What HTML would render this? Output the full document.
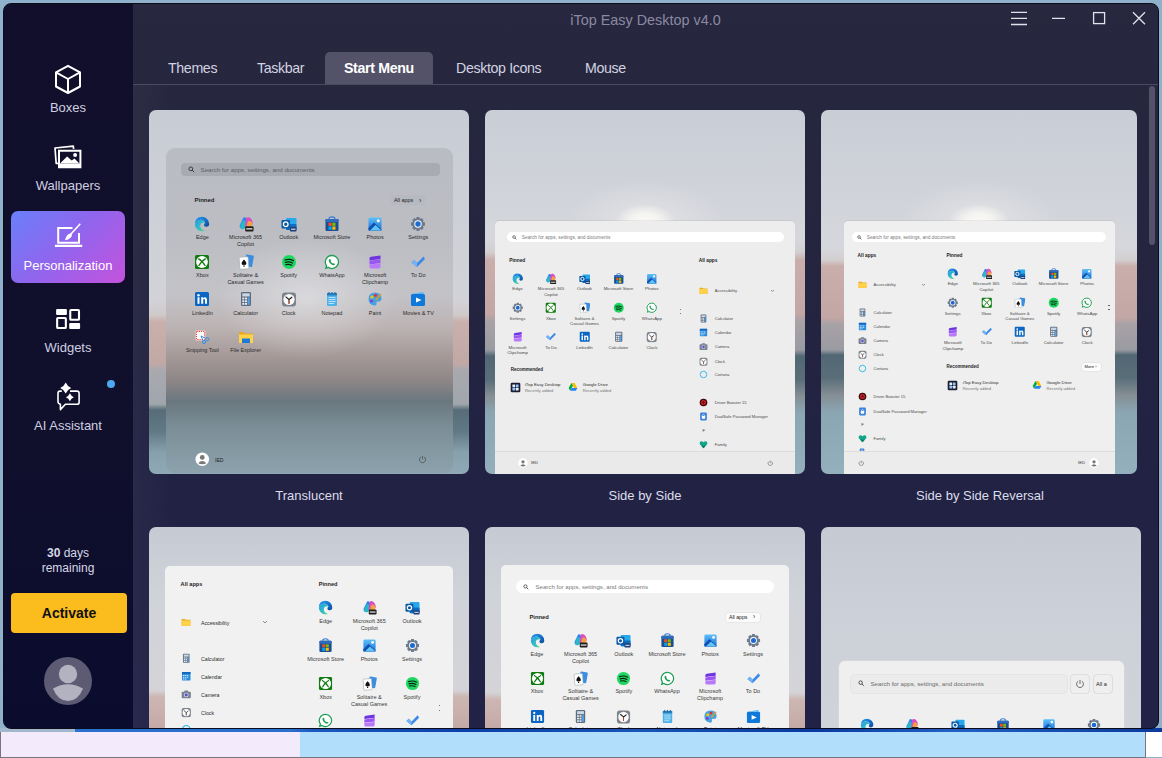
<!DOCTYPE html><html><head><meta charset="utf-8"><title>iTop Easy Desktop</title><style>
*{margin:0;padding:0;box-sizing:border-box}
html,body{width:1162px;height:758px;overflow:hidden;background:#8fb1cc;font-family:"Liberation Sans",sans-serif}
.a{position:absolute}
#win{position:absolute;left:3px;top:3px;width:1156px;height:726px;border-radius:8px;overflow:hidden;border:1px solid #0c0c1a;background:linear-gradient(180deg,#27273f 0%,#25253f 30%,#222343 60%,#212246 100%)}
#inner{position:absolute;left:-4px;top:-4px;width:1162px;height:758px}
#side{position:absolute;left:3px;top:3px;width:130px;height:725px;background:linear-gradient(180deg,#110f2b 0%,#100f2c 60%,#0a0c2e 100%)}
.lbl{position:absolute;color:#cfcfe0;font-size:13px;white-space:nowrap;text-align:center}
.tab{position:absolute;color:#d3d3e0;font-size:14.2px;letter-spacing:-0.35px;white-space:nowrap}
.card{position:absolute;border-radius:7px;overflow:hidden}
.cl{position:absolute;color:#dcdcea;font-size:13px;white-space:nowrap;text-align:center}
.t{white-space:nowrap;line-height:1}
</style></head><body>
<div class="a" style="left:0;top:728px;width:1162px;height:4px;background:linear-gradient(90deg,#2a70d0 0%,#2a70d0 25%,#1c58bf 27%,#0d40a8 40%,#1a55b8 55%,#0a3aa0 70%,#2460c4 82%,#0b3a9c 100%)"></div>
<div class="a" style="left:0;top:728px;width:75px;height:4px;background:#a3b8cc"></div>
<div class="a" style="left:0;top:732px;width:300px;height:25px;background:#f3ebfc"></div>
<div class="a" style="left:300px;top:732px;width:845px;height:25px;background:#b1dffb"></div>
<div class="a" style="left:1145px;top:732px;width:17px;height:25px;background:#ffffff"></div>
<div class="a" style="left:0;top:757px;width:1145px;height:1px;background:#76767e"></div>
<div class="a" style="left:0;top:732px;width:1px;height:26px;background:#76767e"></div>
<div class="a" style="left:1145px;top:732px;width:1px;height:26px;background:#76767e"></div>
<div id="win"><div id="inner">
<div id="side"></div>
<div class="a" style="left:133px;top:85px;width:40px;height:645px;background:linear-gradient(90deg,rgba(255,255,255,.03),rgba(255,255,255,0))"></div>
<div class="a" style="left:0;top:12px;width:1291px;text-align:center;color:#8b8aa2;font-size:14.4px;white-space:nowrap">iTop Easy Desktop v4.0</div>
<svg class="a" style="left:1005px;top:6px" width="150" height="26" viewBox="1005 6 150 26" fill="none" stroke="#e2e2ec" stroke-width="1.3">
<path d="M1011 12.3h16M1011 18.4h16M1011 24.5h16"/>
<path d="M1052 18.4h13"/>
<rect x="1093.6" y="12.6" width="11" height="11"/>
<path d="M1133 12.2l12 12M1145 12.2l-12 12"/>
</svg>
<div class="a" style="left:133px;top:84px;width:1025px;height:1px;background:#4c4a63"></div>
<div class="a" style="left:325px;top:52px;width:108px;height:32px;background:#545269;border-radius:5px 5px 0 0"></div>
<div class="tab" style="left:168px;top:60px;">Themes</div>
<div class="tab" style="left:257px;top:60px;">Taskbar</div>
<div class="tab" style="left:344px;top:60px;font-weight:bold;color:#ffffff;">Start Menu</div>
<div class="tab" style="left:456px;top:60px;">Desktop Icons</div>
<div class="tab" style="left:585px;top:60px;">Mouse</div>
<div class="a" style="left:1149px;top:86px;width:6px;height:159px;background:#545268;border-radius:3px"></div>
<svg class="a" style="left:50px;top:60px" width="36" height="38" viewBox="0 0 36 38" fill="none" stroke="#fff" stroke-width="2" stroke-linejoin="round">
<path d="M18 5.8 L30 12.3 V26.5 L18 33 L6 26.5 V12.3 Z"/><path d="M6 12.3 L18 19 L30 12.3 M18 19 V33"/></svg>
<div class="lbl" style="left:8px;width:120px;top:100px;">Boxes</div>
<svg class="a" style="left:50px;top:140px" width="36" height="34" viewBox="0 0 36 34">
<path d="M8.5 23.3 L6.2 23.5 L5 8 L23.3 6.1 L23.6 9" fill="none" stroke="#fff" stroke-width="1.7" stroke-linejoin="round"/>
<path d="M8 9.8 H31.4 V28.2 H8 Z M10 11.8 V23.4 H29.4 V11.8 Z" fill="#fff" fill-rule="evenodd"/>
<path d="M10 23.6 L17.1 16.5 L21.7 20.4 L24.5 18.6 L29.4 23.6 Z" fill="#fff"/>
<circle cx="25.1" cy="15.1" r="2" fill="#fff"/></svg>
<div class="lbl" style="left:8px;width:120px;top:178px;">Wallpapers</div>
<div class="a" style="left:11px;top:211px;width:114px;height:72px;border-radius:7px;background:linear-gradient(135deg,#6a80fa 0%,#8e66ee 45%,#c452dc 100%)"></div>
<svg class="a" style="left:50px;top:220px" width="36" height="32" viewBox="0 0 36 32" fill="none" stroke="#fff">
<path d="M22.5 7.9 H8.2 V22.7 H29 V13" stroke-width="2"/>
<path d="M4.9 25.9 H32.2" stroke-width="2.2"/>
<path d="M30.3 3.8 L20.5 14.5" stroke-width="1.6"/>
<path d="M20.8 13.6 Q17.6 13.8 16.2 17 L14.8 20.3 Q18.8 19.8 20.6 17.8 Q22.2 16.2 21.9 14.7 Z" fill="#fff" stroke="none"/></svg>
<div class="lbl" style="left:8px;width:120px;top:258px;color:#fff">Personalization</div>
<svg class="a" style="left:50px;top:302px" width="36" height="32" viewBox="0 0 36 32" fill="#fff">
<rect x="6.1" y="7" width="10.8" height="6" rx="1"/><rect x="20.25" y="8.05" width="8.75" height="9.7" rx=".8" fill="none" stroke="#fff" stroke-width="2.1"/>
<rect x="7.15" y="15.95" width="8.7" height="10.1" rx=".8" fill="none" stroke="#fff" stroke-width="2.1"/><rect x="19.2" y="21.1" width="10.9" height="5.8" rx="1"/></svg>
<div class="lbl" style="left:8px;width:120px;top:340px;">Widgets</div>
<svg class="a" style="left:50px;top:378px" width="36" height="36" viewBox="0 0 36 36" fill="none" stroke="#fff" stroke-width="1.6">
<path d="M20 13.1 H27 Q29.1 13.1 29.1 15.2 V24.2 Q29.1 26.3 27 26.3 H15.4 L10.4 31.6 V26.2 Q8 25.8 8 23.5 V15.2 Q8 13.1 10.1 13.1 H11.8" stroke-linejoin="round"/>
<path d="M15.7 4.4 Q17.349999999999998 8.25 21.2 9.9 Q17.349999999999998 11.55 15.7 15.4 Q14.049999999999999 11.55 10.2 9.9 Q14.049999999999999 8.25 15.7 4.4Z" fill="#fff" stroke="none"/>
<path d="M19.9 15.2 Q21.099999999999998 18.0 23.9 19.2 Q21.099999999999998 20.4 19.9 23.2 Q18.7 20.4 15.899999999999999 19.2 Q18.7 18.0 19.9 15.2Z" fill="#fff" stroke="none"/></svg>
<div class="a" style="left:107px;top:380px;width:8px;height:8px;border-radius:50%;background:#4aa9f2"></div>
<div class="lbl" style="left:8px;width:120px;top:418px;">AI Assistant</div>
<div class="lbl" style="left:8px;width:120px;top:546px;font-size:12px;color:#d8d8e6"><b>30</b> days</div>
<div class="lbl" style="left:8px;width:120px;top:561px;font-size:12px;color:#d8d8e6">remaining</div>
<div class="a" style="left:11px;top:593px;width:116px;height:40px;border-radius:4px;background:#fbbd1e;color:#111;font-size:14px;font-weight:bold;text-align:center;line-height:41px">Activate</div>
<svg class="a" style="left:44px;top:657px" width="48" height="48" viewBox="0 0 48 48">
<circle cx="24" cy="24" r="24" fill="#5c5b73"/><circle cx="24" cy="17" r="9.2" fill="#b3b2c0"/>
<path d="M9 31.5 Q24 23 39 31.5 Q34 44 24 44 Q14 44 9 31.5Z" fill="#b3b2c0"/></svg>
<svg width="0" height="0" style="position:absolute"><defs>
<symbol id="i-edge" viewBox="0 0 16 16"><defs><linearGradient id="edg" x1="0" y1="0" x2="1" y2="1"><stop offset="0" stop-color="#2a9ff0"/><stop offset=".55" stop-color="#1670cc"/><stop offset="1" stop-color="#0b4a96"/></linearGradient>
<linearGradient id="edg2" x1="0" y1="0" x2="1" y2="1"><stop offset="0" stop-color="#1e9de6"/><stop offset=".6" stop-color="#35c0c0"/><stop offset="1" stop-color="#5ad67a"/></linearGradient></defs>
<path d="M8 .8 A7.2 7.2 0 0 1 15.2 8 Q15.2 10.8 12.4 10.8 Q10.2 10.8 10 9.2 Q10 7.6 11.2 6.8 Q9.8 3.6 6.6 3.8 Q2.6 4.2 .9 8.4 Q.9 .8 8 .8Z" fill="url(#edg)"/>
<path d="M.9 8.4 Q2.6 4.2 6.6 3.8 Q9.8 3.6 11.2 6.8 Q6.8 5.8 6.2 9.6 Q6 13.4 10.8 15 Q9.4 15.2 8 15.2 A7.2 7.2 0 0 1 .9 8.4Z" fill="url(#edg2)"/></symbol>
<symbol id="i-m365" viewBox="0 0 16 16"><path d="M5.5 1.5 Q7 .8 8 2 L10 5 L6.5 11 Q5 13.5 3 12.5 Q1 11.5 1.8 9 Z" fill="#2f7ff0"/><path d="M3 12.5 Q1.5 11 2.6 8.6 L4.5 5 Q6 3.5 7.5 5.5 L9 8 L6.5 12.5 Q5 13.6 3 12.5Z" fill="#28b8c8"/>
<path d="M8 2 Q9 .9 10.8 1.2 Q12.5 1.6 13.6 3.6 L14.6 6 Q15 8.5 13 10 L10 12 Q8 12.5 7 10.5 Z" fill="#d94fc0"/><path d="M10 5 Q12 4.5 13.6 6 Q15 8 13.5 10 L11 12 Q9 12.8 8.5 10.8Z" fill="#f5a03a"/>
<rect x="7.2" y="10.2" width="8.3" height="5.3" rx="1" fill="#1e1e1e"/><rect x="8.3" y="12.2" width="6.1" height="1.3" fill="#e8e8e8"/></symbol>
<symbol id="i-outlook" viewBox="0 0 16 16"><rect x="5" y="2" width="10.5" height="12" rx="1.2" fill="#28a8ea"/><rect x="5" y="8" width="10.5" height="6" rx="1" fill="#0f6cbd"/><rect x="0.5" y="4" width="8.5" height="8.5" rx="1" fill="#0a5aa8"/><circle cx="4.75" cy="8.25" r="2.3" fill="none" stroke="#fff" stroke-width="1.3"/><rect x="9" y="11" width="6.5" height="4.5" rx=".8" fill="#1d3f78"/><rect x="10" y="12.6" width="4.5" height="1.2" fill="#cfd8e8"/></symbol>
<symbol id="i-store" viewBox="0 0 16 16"><path d="M5 3 Q5 .8 8 .8 Q11 .8 11 3" fill="none" stroke="#3a7bd5" stroke-width="1.2"/><rect x="1.5" y="3" width="13" height="12" rx="1.3" fill="#1c4f8f"/><rect x="1.5" y="3" width="13" height="3" rx="1" fill="#2e6bbf"/><rect x="4.5" y="6.7" width="3.2" height="3.2" fill="#f25022"/><rect x="8.3" y="6.7" width="3.2" height="3.2" fill="#7fba00"/><rect x="4.5" y="10.5" width="3.2" height="3.2" fill="#00a4ef"/><rect x="8.3" y="10.5" width="3.2" height="3.2" fill="#ffb900"/></symbol>
<symbol id="i-photos" viewBox="0 0 16 16"><defs><linearGradient id="pg" x1="0" y1="0" x2="0" y2="1"><stop offset="0" stop-color="#5ec0f8"/><stop offset="1" stop-color="#1a6fd8"/></linearGradient></defs><rect x="1.5" y="1.5" width="13" height="13" rx="1.5" fill="url(#pg)"/><path d="M1.5 12 L7 6.5 L14.5 13.5 V14.5 H1.5Z" fill="#0f4fb0"/><path d="M3 14.5 L8.5 9 L14.5 14.5Z" fill="#62c4f5"/><circle cx="11.3" cy="4.7" r="1.5" fill="#fff"/></symbol>
<symbol id="i-settings" viewBox="0 0 16 16"><path d="M6.6 1 H9.4 L9.9 3 L11.6 2 L13.6 4 L12.8 5.8 L15 6.4 V9.6 L12.8 10.2 L13.8 12 L11.8 14 L10 13 L9.4 15 H6.6 L6.1 13 L4.2 14 L2.2 12 L3.2 10.2 L1 9.6 V6.4 L3.2 5.8 L2.3 4 L4.3 2 L6.1 3Z" fill="#6d7b8c"/><circle cx="8" cy="8" r="3.7" fill="#fff"/><circle cx="8" cy="8" r="2.7" fill="#1f6ad0"/></symbol>
<symbol id="i-xbox" viewBox="0 0 16 16"><rect x="1" y="1" width="14" height="14" rx="1.5" fill="#107c10"/><circle cx="8" cy="8" r="5.9" fill="#fff"/><path d="M4.3 4.6 Q8.2 6.6 11.4 12 M11.7 4.6 Q7.8 6.6 4.6 12" stroke="#107c10" stroke-width="1.25" fill="none"/></symbol>
<symbol id="i-solitaire" viewBox="0 0 16 16"><rect x="7" y="1" width="8" height="11.5" rx="1" fill="#3a8de0" transform="rotate(10 11 7)"/><rect x="1.5" y="3" width="9" height="12" rx="1" fill="#fff" stroke="#9aa" stroke-width=".6" transform="rotate(-4 6 9)"/><path d="M6 5.5 Q3 8.5 3.8 10.3 Q4.8 11.6 6 10.4 L5.2 12.8 H6.8 L6 10.4 Q7.2 11.6 8.2 10.3 Q9 8.5 6 5.5Z" fill="#111"/></symbol>
<symbol id="i-spotify" viewBox="0 0 16 16"><circle cx="8" cy="8" r="7" fill="#1ed760"/><path d="M3.8 6 Q8.5 4.5 12.4 6.6 M4.3 8.4 Q8.3 7.2 11.6 9 M4.8 10.7 Q8 9.8 10.8 11.2" stroke="#0d1f12" stroke-width="1.2" fill="none" stroke-linecap="round"/></symbol>
<symbol id="i-whatsapp" viewBox="0 0 16 16"><path d="M8 1.5 A6.5 6.5 0 1 1 4.2 13.3 L1.8 14.2 L2.6 11.8 A6.5 6.5 0 0 1 8 1.5Z" fill="#fff" stroke="#1f9d55" stroke-width="1.3"/><path d="M5.3 5.2 Q6 4.6 6.5 5.4 L7 6.6 Q7 7 6.6 7.3 Q7.3 8.8 8.8 9.6 Q9.2 9.2 9.5 9.2 L10.7 9.8 Q11.2 10.3 10.6 10.9 Q9.5 11.8 7.5 10.6 Q5.3 9.2 4.8 7 Q4.6 5.9 5.3 5.2Z" fill="#1f9d55"/></symbol>
<symbol id="i-clipchamp" viewBox="0 0 16 16"><path d="M2.5 4.5 Q2.5 3 4 2.8 L13.5 1.5 V5 L2.5 6.5Z" fill="#6f35e0"/><path d="M2.5 6.8 L13.5 5.3 V9 L2.5 10.5Z" fill="#9a55f2"/><path d="M2.5 10.8 L13.5 9.3 V12.5 Q13.5 14.5 11.5 14.5 H4 Q2.5 14.5 2.5 13Z" fill="#b978f8"/></symbol>
<symbol id="i-todo" viewBox="0 0 16 16"><path d="M1.5 8.5 L4 6 L7 9 L13.5 2.5 L15 5 L7 13Z" fill="#3c8ae8"/><path d="M1.5 8.5 L4 6 L7 9 L7 13Z" fill="#74b3f5"/></symbol>
<symbol id="i-linkedin" viewBox="0 0 16 16"><rect x="1" y="1" width="14" height="14" rx="1.5" fill="#0a66c2"/><rect x="3.5" y="6.3" width="2" height="6.5" fill="#fff"/><circle cx="4.5" cy="4.2" r="1.2" fill="#fff"/><path d="M7.2 6.3 H9 V7.3 Q9.8 6.1 11.3 6.2 Q13 6.4 13 8.8 V12.8 H11 V9.2 Q11 7.9 10.1 7.9 Q9.2 7.9 9.2 9.2 V12.8 H7.2Z" fill="#fff"/></symbol>
<symbol id="i-calculator" viewBox="0 0 16 16"><rect x="3" y="1" width="10" height="14" rx="1.3" fill="#5f6c7b"/><rect x="4.3" y="2.3" width="7.4" height="3.2" fill="#c8d8e8"/><g fill="#e8eef4"><rect x="4.3" y="6.6" width="2" height="1.8"/><rect x="7" y="6.6" width="2" height="1.8"/><rect x="4.3" y="9.3" width="2" height="1.8"/><rect x="7" y="9.3" width="2" height="1.8"/><rect x="4.3" y="12" width="2" height="1.8"/><rect x="7" y="12" width="2" height="1.8"/></g><rect x="9.7" y="6.6" width="2" height="7.2" fill="#4da3f0"/></symbol>
<symbol id="i-clock" viewBox="0 0 16 16"><rect x="1" y="1.5" width="14" height="14" rx="3" fill="#7c838d"/><circle cx="8" cy="8.5" r="5.6" fill="#fafafa"/><path d="M8 8.5 L8 12.8 M8 8.5 L4.6 5.6 M8 8.5 L11.2 6" stroke="#1e1e1e" stroke-width="1.1"/><path d="M8 9 L8 12.8" stroke="#e8542a" stroke-width=".8"/></symbol>
<symbol id="i-notepad" viewBox="0 0 16 16"><rect x="3" y="2" width="10" height="13" rx="1" fill="#4fb3ea"/><rect x="3" y="2" width="10" height="2.5" fill="#2a7fc0"/><g stroke="#e8f5fc" stroke-width=".7"><path d="M4.5 6.5 H11.5 M4.5 8.5 H11.5 M4.5 10.5 H11.5 M4.5 12.5 H10"/></g><g fill="#1d5f9a"><rect x="4.5" y="1" width="1" height="2"/><rect x="7.5" y="1" width="1" height="2"/><rect x="10.5" y="1" width="1" height="2"/></g></symbol>
<symbol id="i-paint" viewBox="0 0 16 16"><path d="M8 1.5 Q14.5 1.5 14.5 7.5 Q14.5 11 11 10.5 Q9 10.2 9.5 12.5 Q10 15 7 14.5 Q1.5 13.5 1.5 8 Q1.5 1.5 8 1.5Z" fill="#4aa0e0"/><circle cx="5" cy="6" r="1.6" fill="#f5c400"/><circle cx="8.5" cy="4.3" r="1.5" fill="#e0312a"/><circle cx="11.5" cy="6.5" r="1.4" fill="#2bb04a"/><circle cx="4.5" cy="10" r="1.5" fill="#7a3ed8"/><path d="M9 9 L14 3" stroke="#d89a50" stroke-width="1.6"/></symbol>
<symbol id="i-movies" viewBox="0 0 16 16"><rect x="1" y="3" width="14" height="12" rx="1.5" fill="#1078d8"/><path d="M1 3 L13 1 L14 3Z" fill="#5cb8f5"/><path d="M6 6.5 L11.5 9 L6 11.5Z" fill="#fff"/></symbol>
<symbol id="i-snipping" viewBox="0 0 16 16"><rect x="1.5" y="1.5" width="10" height="10" rx="1" fill="#fff" stroke="#d8a0a0" stroke-width=".5"/><path d="M2.5 2.5 H10.5 V10.5 H2.5Z" fill="none" stroke="#e0442e" stroke-width="1" stroke-dasharray="1.2 1"/><circle cx="10" cy="13" r="1.6" fill="none" stroke="#3a8ee0" stroke-width="1"/><circle cx="13.3" cy="10.3" r="1.6" fill="none" stroke="#3a8ee0" stroke-width="1"/><path d="M7 7 L9.2 11.8 M7 7 L12 9.5" stroke="#3a8ee0" stroke-width="1"/></symbol>
<symbol id="i-explorer" viewBox="0 0 16 16"><path d="M1 3 H6 L7.5 4.5 H15 V14 H1Z" fill="#e8a91c"/><rect x="1" y="5.5" width="14" height="8.5" fill="#ffd24a"/><rect x="4" y="9.5" width="8" height="4.5" fill="#1d7ad8"/></symbol>
<symbol id="i-folder" viewBox="0 0 16 16"><path d="M1 3 H6 L7.5 4.5 H15 V14 H1Z" fill="#e8a91c"/><rect x="1" y="5.5" width="14" height="8.5" fill="#ffd24a"/></symbol>
<symbol id="i-calendar" viewBox="0 0 16 16"><rect x="1.5" y="1.5" width="13" height="13" rx="1" fill="#2a8ee0"/><rect x="1.5" y="1.5" width="13" height="3" fill="#1468c0"/><g fill="#cfe6fa"><rect x="3" y="6" width="2" height="1.6"/><rect x="6" y="6" width="2" height="1.6"/><rect x="9" y="6" width="2" height="1.6"/><rect x="3" y="8.7" width="2" height="1.6"/><rect x="6" y="8.7" width="2" height="1.6"/><rect x="9" y="8.7" width="2" height="1.6"/><rect x="3" y="11.4" width="2" height="1.6"/><rect x="6" y="11.4" width="2" height="1.6"/></g></symbol>
<symbol id="i-camera" viewBox="0 0 16 16"><rect x="1" y="4" width="14" height="10" rx="1.5" fill="#7a828e"/><rect x="5" y="2.3" width="6" height="2.5" rx=".6" fill="#7a828e"/><circle cx="8" cy="9" r="3.4" fill="#e0e4ea"/><circle cx="8" cy="9" r="2.4" fill="#5a4fd8"/></symbol>
<symbol id="i-cortana" viewBox="0 0 16 16"><circle cx="8" cy="8" r="5.8" fill="none" stroke="#2fb5e8" stroke-width="1.6"/></symbol>
<symbol id="i-driver" viewBox="0 0 16 16"><circle cx="8" cy="8" r="6.8" fill="#3a0a0a"/><circle cx="8" cy="8" r="4.5" fill="#c8202a"/><path d="M5.5 8 H10.5 M8 5.5 V10.5" stroke="#3a0a0a" stroke-width="1"/></symbol>
<symbol id="i-dualsafe" viewBox="0 0 16 16"><rect x="2" y="1" width="12" height="14" rx="2" fill="#3b82d8"/><rect x="5" y="7" width="6" height="5" rx=".8" fill="#fff"/><path d="M6 7 V5.5 Q8 3.2 10 5.5 V7" stroke="#fff" stroke-width="1.1" fill="none"/></symbol>
<symbol id="i-family" viewBox="0 0 16 16"><path d="M8 14.5 L1.8 8 Q0 5.5 2 3.2 Q4.8 1 8 4.2 Q11.2 1 14 3.2 Q16 5.5 14.2 8Z" fill="#12a58a"/><path d="M8 14.5 L4 10.3 Q6 8.8 8 10.5 Q10 8.8 12 10.3Z" fill="#0b7a66"/></symbol>
<symbol id="i-itop" viewBox="0 0 16 16"><rect x="1" y="1" width="14" height="14" rx="2" fill="#1c1d2e"/><rect x="3.5" y="3.5" width="4" height="4" rx=".6" fill="#e8f0ff"/><rect x="8.5" y="3.5" width="4" height="4" rx=".6" fill="#8fc4ff"/><rect x="3.5" y="8.5" width="4" height="4" rx=".6" fill="#8fc4ff"/><rect x="8.5" y="8.5" width="4" height="4" rx=".6" fill="#e8f0ff"/></symbol>
<symbol id="i-gdrive" viewBox="0 0 16 16"><path d="M5.5 1.5 H10.5 L15 9.5 H10Z" fill="#ffba00"/><path d="M5.5 1.5 L1 9.5 L3.5 14 L8 6Z" fill="#00ac47"/><path d="M3.5 14 H12.5 L15 9.5 H6Z" fill="#2684fc"/></symbol>
<symbol id="i-search" viewBox="0 0 16 16"><circle cx="6.5" cy="6.5" r="4.3" fill="none" stroke="#222" stroke-width="1.8"/><path d="M9.8 9.8 L14 14" stroke="#222" stroke-width="2"/></symbol>
<symbol id="i-power" viewBox="0 0 16 16"><path d="M5 3.5 A5.5 5.5 0 1 0 11 3.5" fill="none" stroke="#444" stroke-width="1.2"/><path d="M8 1.5 V8" stroke="#444" stroke-width="1.2"/></symbol>
<symbol id="i-user" viewBox="0 0 16 16"><circle cx="8" cy="8" r="7.5" fill="#fff"/><circle cx="8" cy="6" r="2.6" fill="#777"/><path d="M3.5 12.3 Q8 7.5 12.5 12.3 Q8 14.5 3.5 12.3Z" fill="#777"/></symbol>
<symbol id="i-usergrey" viewBox="0 0 16 16"><circle cx="8" cy="8" r="7.5" fill="#e4e4e4"/><circle cx="8" cy="6" r="2.6" fill="#777"/><path d="M3.5 12.3 Q8 7.5 12.5 12.3 Q8 14.5 3.5 12.3Z" fill="#777"/></symbol>
</defs></svg>
<div class="card" style="left:149px;top:110px;width:320px;height:364px;background:linear-gradient(180deg,#c8ccd5 0.0%,#d2d3d8 52.2%,#d0c9ca 56.3%,#c9b0ac 58.2%,#c0a8a5 69.8%,#a9a9af 71.4%,#a0a6ac 80.8%,#566d78 82.4%,#627a86 88.5%,#86a0ac 94.0%,#8fa9b6 100.0%)"><div class="a" style="left:-149px;top:-110px;width:1162px;height:758px">
<div class="a" style="left:166.00px;top:148.00px;width:287.00px;height:325.00px;border-radius:9px;background:radial-gradient(ellipse 90px 60px at 140px 150px,rgba(235,235,238,.55),rgba(235,235,238,0)),linear-gradient(180deg,#b9bcc3 0%,#bdbec3 30%,#c3c3c7 45%,#bcb3b3 55%,#a39796 65%,#8c8586 72%,#6a777f 78%,#7b8e97 86%,#8ca2ac 100%)"></div>
<div class="a" style="left:181.00px;top:163.20px;width:259.00px;height:12.80px;border-radius:4px;background:#a8abb2"></div>
<svg class="a" style="left:188.00px;top:166.30px" width="7" height="7"><use href="#i-search"/></svg>
<div class="a t" style="left:200.50px;top:166.95px;font-size:6.2px;color:#5e6168;font-weight:normal;">Search for apps, settings, and documents</div>
<div class="a t" style="left:194.50px;top:196.76px;font-size:6px;color:#1e1e1e;font-weight:bold;">Pinned</div>
<div class="a" style="left:390.50px;top:195.00px;width:34.00px;height:10.00px;border-radius:3px;background:#b6b9c0"></div>
<div class="a t" style="left:394.00px;top:198.36px;font-size:5.4px;color:#1e1e1e;font-weight:normal;">All apps</div>
<div class="a t" style="left:419.00px;top:196.52px;font-size:7px;color:#333;font-weight:normal;">&#8250;</div>
<svg class="a" style="left:194.40px;top:215.75px" width="16" height="16"><use href="#i-edge"/></svg>
<div class="a t" style="left:172.40px;width:60px;text-align:center;top:234.37px;font-size:5.5px;color:#2a2a2a;font-weight:normal;line-height:7px;">Edge</div>
<svg class="a" style="left:237.60px;top:215.75px" width="16" height="16"><use href="#i-m365"/></svg>
<div class="a t" style="left:215.60px;width:60px;text-align:center;top:234.37px;font-size:5.5px;color:#2a2a2a;font-weight:normal;line-height:7px;">Microsoft 365<br>Copilot</div>
<svg class="a" style="left:280.70px;top:215.75px" width="16" height="16"><use href="#i-outlook"/></svg>
<div class="a t" style="left:258.70px;width:60px;text-align:center;top:234.37px;font-size:5.5px;color:#2a2a2a;font-weight:normal;line-height:7px;">Outlook</div>
<svg class="a" style="left:323.90px;top:215.75px" width="16" height="16"><use href="#i-store"/></svg>
<div class="a t" style="left:301.90px;width:60px;text-align:center;top:234.37px;font-size:5.5px;color:#2a2a2a;font-weight:normal;line-height:7px;">Microsoft Store</div>
<svg class="a" style="left:367.10px;top:215.75px" width="16" height="16"><use href="#i-photos"/></svg>
<div class="a t" style="left:345.10px;width:60px;text-align:center;top:234.37px;font-size:5.5px;color:#2a2a2a;font-weight:normal;line-height:7px;">Photos</div>
<svg class="a" style="left:410.30px;top:215.75px" width="16" height="16"><use href="#i-settings"/></svg>
<div class="a t" style="left:388.30px;width:60px;text-align:center;top:234.37px;font-size:5.5px;color:#2a2a2a;font-weight:normal;line-height:7px;">Settings</div>
<svg class="a" style="left:194.40px;top:253.80px" width="16" height="16"><use href="#i-xbox"/></svg>
<div class="a t" style="left:172.40px;width:60px;text-align:center;top:272.17px;font-size:5.5px;color:#2a2a2a;font-weight:normal;line-height:7px;">Xbox</div>
<svg class="a" style="left:237.60px;top:253.80px" width="16" height="16"><use href="#i-solitaire"/></svg>
<div class="a t" style="left:215.60px;width:60px;text-align:center;top:272.17px;font-size:5.5px;color:#2a2a2a;font-weight:normal;line-height:7px;">Solitaire &amp;<br>Casual Games</div>
<svg class="a" style="left:280.70px;top:253.80px" width="16" height="16"><use href="#i-spotify"/></svg>
<div class="a t" style="left:258.70px;width:60px;text-align:center;top:272.17px;font-size:5.5px;color:#2a2a2a;font-weight:normal;line-height:7px;">Spotify</div>
<svg class="a" style="left:323.90px;top:253.80px" width="16" height="16"><use href="#i-whatsapp"/></svg>
<div class="a t" style="left:301.90px;width:60px;text-align:center;top:272.17px;font-size:5.5px;color:#2a2a2a;font-weight:normal;line-height:7px;">WhatsApp</div>
<svg class="a" style="left:367.10px;top:253.80px" width="16" height="16"><use href="#i-clipchamp"/></svg>
<div class="a t" style="left:345.10px;width:60px;text-align:center;top:272.17px;font-size:5.5px;color:#2a2a2a;font-weight:normal;line-height:7px;">Microsoft<br>Clipchamp</div>
<svg class="a" style="left:410.30px;top:253.80px" width="16" height="16"><use href="#i-todo"/></svg>
<div class="a t" style="left:388.30px;width:60px;text-align:center;top:272.17px;font-size:5.5px;color:#2a2a2a;font-weight:normal;line-height:7px;">To Do</div>
<svg class="a" style="left:194.40px;top:291.30px" width="16" height="16"><use href="#i-linkedin"/></svg>
<div class="a t" style="left:172.40px;width:60px;text-align:center;top:309.67px;font-size:5.5px;color:#2a2a2a;font-weight:normal;line-height:7px;">LinkedIn</div>
<svg class="a" style="left:237.60px;top:291.30px" width="16" height="16"><use href="#i-calculator"/></svg>
<div class="a t" style="left:215.60px;width:60px;text-align:center;top:309.67px;font-size:5.5px;color:#2a2a2a;font-weight:normal;line-height:7px;">Calculator</div>
<svg class="a" style="left:280.70px;top:291.30px" width="16" height="16"><use href="#i-clock"/></svg>
<div class="a t" style="left:258.70px;width:60px;text-align:center;top:309.67px;font-size:5.5px;color:#2a2a2a;font-weight:normal;line-height:7px;">Clock</div>
<svg class="a" style="left:323.90px;top:291.30px" width="16" height="16"><use href="#i-notepad"/></svg>
<div class="a t" style="left:301.90px;width:60px;text-align:center;top:309.67px;font-size:5.5px;color:#2a2a2a;font-weight:normal;line-height:7px;">Notepad</div>
<svg class="a" style="left:367.10px;top:291.30px" width="16" height="16"><use href="#i-paint"/></svg>
<div class="a t" style="left:345.10px;width:60px;text-align:center;top:309.67px;font-size:5.5px;color:#2a2a2a;font-weight:normal;line-height:7px;">Paint</div>
<svg class="a" style="left:410.30px;top:291.30px" width="16" height="16"><use href="#i-movies"/></svg>
<div class="a t" style="left:388.30px;width:60px;text-align:center;top:309.67px;font-size:5.5px;color:#2a2a2a;font-weight:normal;line-height:7px;">Movies &amp; TV</div>
<svg class="a" style="left:194.40px;top:328.80px" width="16" height="16"><use href="#i-snipping"/></svg>
<div class="a t" style="left:172.40px;width:60px;text-align:center;top:347.47px;font-size:5.5px;color:#2a2a2a;font-weight:normal;line-height:7px;">Snipping Tool</div>
<svg class="a" style="left:237.60px;top:328.80px" width="16" height="16"><use href="#i-explorer"/></svg>
<div class="a t" style="left:215.60px;width:60px;text-align:center;top:347.47px;font-size:5.5px;color:#2a2a2a;font-weight:normal;line-height:7px;">File Explorer</div>
<svg class="a" style="left:195.25px;top:452.25px" width="14.5" height="14.5"><use href="#i-user"/></svg>
<div class="a t" style="left:215.00px;top:457.70px;font-size:5px;color:#222;font-weight:normal;">IED</div>
<svg class="a" style="left:417.50px;top:455.00px" width="9" height="9"><use href="#i-power"/></svg>
</div></div>
<div class="card" style="left:485px;top:110px;width:320px;height:364px;background:radial-gradient(ellipse 30px 17px at 160px 111px,rgba(250,249,246,1),rgba(248,247,244,.85) 45%,rgba(240,240,240,0)),radial-gradient(ellipse 78.0px 40.8px at 160px 111px,rgba(240,238,238,.55),rgba(240,238,238,0)),linear-gradient(180deg,#c9cdd6 0.0%,#d5d7dc 35.7%,#d3cfd0 39.0%,#c9aeab 41.2%,#c2a7a4 56.0%,#a8a2a6 58.2%,#9a9ba2 65.9%,#516874 67.6%,#5a6e79 74.2%,#858e94 78.6%,#8aa6b3 83.0%,#95b0bd 100.0%)"><div class="a" style="left:-485px;top:-110px;width:1162px;height:758px">
<div class="a" style="left:495.00px;top:220.60px;width:300.00px;height:254.00px;border-radius:4px 4px 0 0;background:#ededed;box-shadow:0 -0.5px 0 rgba(0,0,0,.12)"></div>
<div class="a" style="left:507.00px;top:232.30px;width:276.50px;height:10.20px;border-radius:6px;background:#ffffff"></div>
<svg class="a" style="left:511.50px;top:234.90px" width="5" height="5"><use href="#i-search"/></svg>
<div class="a t" style="left:521.80px;top:235.87px;font-size:4.8px;color:#7a7a7a;font-weight:normal;">Search for apps, settings, and documents</div>
<div class="a t" style="left:509.30px;top:258.67px;font-size:4.8px;color:#1e1e1e;font-weight:bold;">Pinned</div>
<div class="a t" style="left:698.80px;top:259.27px;font-size:4.8px;color:#1e1e1e;font-weight:bold;">All apps</div>
<svg class="a" style="left:511.75px;top:272.55px" width="11.5" height="11.5"><use href="#i-edge"/></svg>
<div class="a t" style="left:487.50px;width:60px;text-align:center;top:286.27px;font-size:4.4px;color:#4a4a4a;font-weight:normal;line-height:5.7px;">Edge</div>
<svg class="a" style="left:545.25px;top:272.55px" width="11.5" height="11.5"><use href="#i-m365"/></svg>
<div class="a t" style="left:521.00px;width:60px;text-align:center;top:286.27px;font-size:4.4px;color:#4a4a4a;font-weight:normal;line-height:5.7px;">Microsoft 365<br>Copilot</div>
<svg class="a" style="left:578.75px;top:272.55px" width="11.5" height="11.5"><use href="#i-outlook"/></svg>
<div class="a t" style="left:554.50px;width:60px;text-align:center;top:286.27px;font-size:4.4px;color:#4a4a4a;font-weight:normal;line-height:5.7px;">Outlook</div>
<svg class="a" style="left:612.65px;top:272.55px" width="11.5" height="11.5"><use href="#i-store"/></svg>
<div class="a t" style="left:588.40px;width:60px;text-align:center;top:286.27px;font-size:4.4px;color:#4a4a4a;font-weight:normal;line-height:5.7px;">Microsoft Store</div>
<svg class="a" style="left:646.15px;top:272.55px" width="11.5" height="11.5"><use href="#i-photos"/></svg>
<div class="a t" style="left:621.90px;width:60px;text-align:center;top:286.27px;font-size:4.4px;color:#4a4a4a;font-weight:normal;line-height:5.7px;">Photos</div>
<svg class="a" style="left:511.75px;top:301.85px" width="11.5" height="11.5"><use href="#i-settings"/></svg>
<div class="a t" style="left:487.50px;width:60px;text-align:center;top:315.57px;font-size:4.4px;color:#4a4a4a;font-weight:normal;line-height:5.7px;">Settings</div>
<svg class="a" style="left:545.25px;top:301.85px" width="11.5" height="11.5"><use href="#i-xbox"/></svg>
<div class="a t" style="left:521.00px;width:60px;text-align:center;top:315.57px;font-size:4.4px;color:#4a4a4a;font-weight:normal;line-height:5.7px;">Xbox</div>
<svg class="a" style="left:578.75px;top:301.85px" width="11.5" height="11.5"><use href="#i-solitaire"/></svg>
<div class="a t" style="left:554.50px;width:60px;text-align:center;top:315.57px;font-size:4.4px;color:#4a4a4a;font-weight:normal;line-height:5.7px;">Solitaire &amp;<br>Casual Games</div>
<svg class="a" style="left:612.65px;top:301.85px" width="11.5" height="11.5"><use href="#i-spotify"/></svg>
<div class="a t" style="left:588.40px;width:60px;text-align:center;top:315.57px;font-size:4.4px;color:#4a4a4a;font-weight:normal;line-height:5.7px;">Spotify</div>
<svg class="a" style="left:646.15px;top:301.85px" width="11.5" height="11.5"><use href="#i-whatsapp"/></svg>
<div class="a t" style="left:621.90px;width:60px;text-align:center;top:315.57px;font-size:4.4px;color:#4a4a4a;font-weight:normal;line-height:5.7px;">WhatsApp</div>
<svg class="a" style="left:511.75px;top:331.05px" width="11.5" height="11.5"><use href="#i-clipchamp"/></svg>
<div class="a t" style="left:487.50px;width:60px;text-align:center;top:344.77px;font-size:4.4px;color:#4a4a4a;font-weight:normal;line-height:5.7px;">Microsoft<br>Clipchamp</div>
<svg class="a" style="left:545.25px;top:331.05px" width="11.5" height="11.5"><use href="#i-todo"/></svg>
<div class="a t" style="left:521.00px;width:60px;text-align:center;top:344.77px;font-size:4.4px;color:#4a4a4a;font-weight:normal;line-height:5.7px;">To Do</div>
<svg class="a" style="left:578.75px;top:331.05px" width="11.5" height="11.5"><use href="#i-linkedin"/></svg>
<div class="a t" style="left:554.50px;width:60px;text-align:center;top:344.77px;font-size:4.4px;color:#4a4a4a;font-weight:normal;line-height:5.7px;">LinkedIn</div>
<svg class="a" style="left:612.65px;top:331.05px" width="11.5" height="11.5"><use href="#i-calculator"/></svg>
<div class="a t" style="left:588.40px;width:60px;text-align:center;top:344.77px;font-size:4.4px;color:#4a4a4a;font-weight:normal;line-height:5.7px;">Calculator</div>
<svg class="a" style="left:646.15px;top:331.05px" width="11.5" height="11.5"><use href="#i-clock"/></svg>
<div class="a t" style="left:621.90px;width:60px;text-align:center;top:344.77px;font-size:4.4px;color:#4a4a4a;font-weight:normal;line-height:5.7px;">Clock</div>
<div class="a" style="left:679.70px;top:309.20px;width:1.20px;height:1.20px;border-radius:50%;background:#555"></div>
<div class="a" style="left:679.70px;top:313.20px;width:1.20px;height:1.20px;border-radius:50%;background:#555"></div>
<div class="a t" style="left:510.70px;top:368.18px;font-size:4.5px;color:#1e1e1e;font-weight:bold;">Recommended</div>
<svg class="a" style="left:509.50px;top:381.50px" width="11" height="11"><use href="#i-itop"/></svg>
<div class="a t" style="left:524.90px;top:382.75px;font-size:4.3px;color:#2a2a2a;font-weight:normal;">iTop Easy Desktop</div>
<div class="a t" style="left:524.90px;top:388.52px;font-size:4.1px;color:#777;font-weight:normal;">Recently added</div>
<svg class="a" style="left:568.20px;top:382.00px" width="10" height="10"><use href="#i-gdrive"/></svg>
<div class="a t" style="left:582.80px;top:382.75px;font-size:4.3px;color:#2a2a2a;font-weight:normal;">Google Drive</div>
<div class="a t" style="left:582.80px;top:388.52px;font-size:4.1px;color:#777;font-weight:normal;">Recently added</div>
<svg class="a" style="left:699.10px;top:286.30px" width="9" height="9"><use href="#i-folder"/></svg>
<div class="a t" style="left:714.70px;top:289.32px;font-size:4.1px;color:#4a4a4a;font-weight:normal;">Accessibility</div>
<svg class="a" style="left:699.10px;top:314.40px" width="9" height="9"><use href="#i-calculator"/></svg>
<div class="a t" style="left:714.70px;top:317.42px;font-size:4.1px;color:#4a4a4a;font-weight:normal;">Calculator</div>
<svg class="a" style="left:699.10px;top:328.30px" width="9" height="9"><use href="#i-calendar"/></svg>
<div class="a t" style="left:714.70px;top:331.32px;font-size:4.1px;color:#4a4a4a;font-weight:normal;">Calendar</div>
<svg class="a" style="left:699.10px;top:342.30px" width="9" height="9"><use href="#i-camera"/></svg>
<div class="a t" style="left:714.70px;top:345.32px;font-size:4.1px;color:#4a4a4a;font-weight:normal;">Camera</div>
<svg class="a" style="left:699.10px;top:356.50px" width="9" height="9"><use href="#i-clock"/></svg>
<div class="a t" style="left:714.70px;top:359.52px;font-size:4.1px;color:#4a4a4a;font-weight:normal;">Clock</div>
<svg class="a" style="left:699.10px;top:370.40px" width="9" height="9"><use href="#i-cortana"/></svg>
<div class="a t" style="left:714.70px;top:373.42px;font-size:4.1px;color:#4a4a4a;font-weight:normal;">Cortana</div>
<svg class="a" style="left:699.10px;top:398.20px" width="9" height="9"><use href="#i-driver"/></svg>
<div class="a t" style="left:714.70px;top:401.22px;font-size:4.1px;color:#4a4a4a;font-weight:normal;">Driver Booster 15</div>
<svg class="a" style="left:699.10px;top:412.40px" width="9" height="9"><use href="#i-dualsafe"/></svg>
<div class="a t" style="left:714.70px;top:415.42px;font-size:4.1px;color:#4a4a4a;font-weight:normal;">DualSafe Password Manager</div>
<div class="a t" style="left:702.40px;top:429.12px;font-size:4.1px;color:#333;font-weight:normal;">F</div>
<svg class="a" style="left:699.10px;top:440.30px" width="9" height="9"><use href="#i-family"/></svg>
<div class="a t" style="left:714.70px;top:443.32px;font-size:4.1px;color:#4a4a4a;font-weight:normal;">Family</div>
<svg class="a" style="left:770.10px;top:289.05px" width="5" height="3.5"><path d="M1 1 L2.5 2.5 L4 1" fill="none" stroke="#666" stroke-width=".7"/></svg>
<div class="a" style="left:495.00px;top:451.30px;width:300.00px;height:1.00px;background:#dcdcdc"></div>
<div class="a" style="left:495.00px;top:452.30px;width:300.00px;height:22.00px;background:#eaeaea"></div>
<svg class="a" style="left:517.60px;top:458.00px" width="10" height="10"><use href="#i-user"/></svg>
<div class="a t" style="left:531.00px;top:461.49px;font-size:4.2px;color:#333;font-weight:normal;">IED</div>
<svg class="a" style="left:766.55px;top:459.75px" width="6.5" height="6.5"><use href="#i-power"/></svg>
</div></div>
<div class="card" style="left:821px;top:110px;width:316px;height:364px;background:radial-gradient(ellipse 30px 17px at 158px 111px,rgba(250,249,246,1),rgba(248,247,244,.85) 45%,rgba(240,240,240,0)),radial-gradient(ellipse 78.0px 40.8px at 158px 111px,rgba(240,238,238,.55),rgba(240,238,238,0)),linear-gradient(180deg,#c9cdd6 0.0%,#d5d7dc 37.9%,#d3cfd0 41.2%,#c9aeab 42.9%,#c2a7a4 57.1%,#a8a2a6 58.8%,#9a9ba2 65.9%,#516874 67.3%,#5a6e79 73.6%,#858e94 78.3%,#8aa6b3 83.0%,#95b0bd 100.0%)"><div class="a" style="left:-821px;top:-110px;width:1162px;height:758px">
<div class="a" style="left:844.00px;top:220.90px;width:270.70px;height:253.00px;border-radius:4px 4px 0 0;background:#efefef;box-shadow:0 -0.5px 0 rgba(0,0,0,.12)"></div>
<div class="a" style="left:852.00px;top:232.30px;width:254.20px;height:10.20px;border-radius:6px;background:#ffffff"></div>
<svg class="a" style="left:856.50px;top:234.90px" width="5" height="5"><use href="#i-search"/></svg>
<div class="a t" style="left:866.70px;top:235.87px;font-size:4.8px;color:#7a7a7a;font-weight:normal;">Search for apps, settings, and documents</div>
<div class="a t" style="left:857.60px;top:254.27px;font-size:4.8px;color:#1e1e1e;font-weight:bold;">All apps</div>
<div class="a t" style="left:946.50px;top:254.27px;font-size:4.8px;color:#1e1e1e;font-weight:bold;">Pinned</div>
<svg class="a" style="left:947.05px;top:267.75px" width="11.5" height="11.5"><use href="#i-edge"/></svg>
<div class="a t" style="left:922.80px;width:60px;text-align:center;top:281.17px;font-size:4.4px;color:#4a4a4a;font-weight:normal;line-height:5.7px;">Edge</div>
<svg class="a" style="left:980.55px;top:267.75px" width="11.5" height="11.5"><use href="#i-m365"/></svg>
<div class="a t" style="left:956.30px;width:60px;text-align:center;top:281.17px;font-size:4.4px;color:#4a4a4a;font-weight:normal;line-height:5.7px;">Microsoft 365<br>Copilot</div>
<svg class="a" style="left:1014.05px;top:267.75px" width="11.5" height="11.5"><use href="#i-outlook"/></svg>
<div class="a t" style="left:989.80px;width:60px;text-align:center;top:281.17px;font-size:4.4px;color:#4a4a4a;font-weight:normal;line-height:5.7px;">Outlook</div>
<svg class="a" style="left:1047.85px;top:267.75px" width="11.5" height="11.5"><use href="#i-store"/></svg>
<div class="a t" style="left:1023.60px;width:60px;text-align:center;top:281.17px;font-size:4.4px;color:#4a4a4a;font-weight:normal;line-height:5.7px;">Microsoft Store</div>
<svg class="a" style="left:1081.45px;top:267.75px" width="11.5" height="11.5"><use href="#i-photos"/></svg>
<div class="a t" style="left:1057.20px;width:60px;text-align:center;top:281.17px;font-size:4.4px;color:#4a4a4a;font-weight:normal;line-height:5.7px;">Photos</div>
<svg class="a" style="left:947.05px;top:296.95px" width="11.5" height="11.5"><use href="#i-settings"/></svg>
<div class="a t" style="left:922.80px;width:60px;text-align:center;top:310.77px;font-size:4.4px;color:#4a4a4a;font-weight:normal;line-height:5.7px;">Settings</div>
<svg class="a" style="left:980.55px;top:296.95px" width="11.5" height="11.5"><use href="#i-xbox"/></svg>
<div class="a t" style="left:956.30px;width:60px;text-align:center;top:310.77px;font-size:4.4px;color:#4a4a4a;font-weight:normal;line-height:5.7px;">Xbox</div>
<svg class="a" style="left:1014.05px;top:296.95px" width="11.5" height="11.5"><use href="#i-solitaire"/></svg>
<div class="a t" style="left:989.80px;width:60px;text-align:center;top:310.77px;font-size:4.4px;color:#4a4a4a;font-weight:normal;line-height:5.7px;">Solitaire &amp;<br>Casual Games</div>
<svg class="a" style="left:1047.85px;top:296.95px" width="11.5" height="11.5"><use href="#i-spotify"/></svg>
<div class="a t" style="left:1023.60px;width:60px;text-align:center;top:310.77px;font-size:4.4px;color:#4a4a4a;font-weight:normal;line-height:5.7px;">Spotify</div>
<svg class="a" style="left:1081.45px;top:296.95px" width="11.5" height="11.5"><use href="#i-whatsapp"/></svg>
<div class="a t" style="left:1057.20px;width:60px;text-align:center;top:310.77px;font-size:4.4px;color:#4a4a4a;font-weight:normal;line-height:5.7px;">WhatsApp</div>
<svg class="a" style="left:947.05px;top:326.25px" width="11.5" height="11.5"><use href="#i-clipchamp"/></svg>
<div class="a t" style="left:922.80px;width:60px;text-align:center;top:339.97px;font-size:4.4px;color:#4a4a4a;font-weight:normal;line-height:5.7px;">Microsoft<br>Clipchamp</div>
<svg class="a" style="left:980.55px;top:326.25px" width="11.5" height="11.5"><use href="#i-todo"/></svg>
<div class="a t" style="left:956.30px;width:60px;text-align:center;top:339.97px;font-size:4.4px;color:#4a4a4a;font-weight:normal;line-height:5.7px;">To Do</div>
<svg class="a" style="left:1014.05px;top:326.25px" width="11.5" height="11.5"><use href="#i-linkedin"/></svg>
<div class="a t" style="left:989.80px;width:60px;text-align:center;top:339.97px;font-size:4.4px;color:#4a4a4a;font-weight:normal;line-height:5.7px;">LinkedIn</div>
<svg class="a" style="left:1047.85px;top:326.25px" width="11.5" height="11.5"><use href="#i-calculator"/></svg>
<div class="a t" style="left:1023.60px;width:60px;text-align:center;top:339.97px;font-size:4.4px;color:#4a4a4a;font-weight:normal;line-height:5.7px;">Calculator</div>
<svg class="a" style="left:1081.45px;top:326.25px" width="11.5" height="11.5"><use href="#i-clock"/></svg>
<div class="a t" style="left:1057.20px;width:60px;text-align:center;top:339.97px;font-size:4.4px;color:#4a4a4a;font-weight:normal;line-height:5.7px;">Clock</div>
<div class="a" style="left:1108.40px;top:305.00px;width:1.20px;height:1.20px;border-radius:50%;background:#555"></div>
<div class="a" style="left:1108.40px;top:309.00px;width:1.20px;height:1.20px;border-radius:50%;background:#555"></div>
<div class="a t" style="left:946.50px;top:364.98px;font-size:4.5px;color:#1e1e1e;font-weight:bold;">Recommended</div>
<div class="a" style="left:1082.00px;top:363.00px;width:19.40px;height:8.00px;border-radius:2px;background:#fbfbfb;box-shadow:0 0 0 .5px #ddd"></div>
<div class="a t" style="left:1084.50px;top:365.49px;font-size:4.2px;color:#222;font-weight:normal;">More &#8250;</div>
<svg class="a" style="left:947.30px;top:379.50px" width="11" height="11"><use href="#i-itop"/></svg>
<div class="a t" style="left:962.70px;top:381.25px;font-size:4.3px;color:#2a2a2a;font-weight:normal;">iTop Easy Desktop</div>
<div class="a t" style="left:962.70px;top:387.02px;font-size:4.1px;color:#777;font-weight:normal;">Recently added</div>
<svg class="a" style="left:1031.60px;top:380.00px" width="10" height="10"><use href="#i-gdrive"/></svg>
<div class="a t" style="left:1046.50px;top:381.25px;font-size:4.3px;color:#2a2a2a;font-weight:normal;">Google Drive</div>
<div class="a t" style="left:1046.50px;top:387.02px;font-size:4.1px;color:#777;font-weight:normal;">Recently added</div>
<svg class="a" style="left:857.90px;top:280.30px" width="9" height="9"><use href="#i-folder"/></svg>
<div class="a t" style="left:873.50px;top:283.32px;font-size:4.1px;color:#4a4a4a;font-weight:normal;">Accessibility</div>
<svg class="a" style="left:857.90px;top:308.20px" width="9" height="9"><use href="#i-calculator"/></svg>
<div class="a t" style="left:873.50px;top:311.22px;font-size:4.1px;color:#4a4a4a;font-weight:normal;">Calculator</div>
<svg class="a" style="left:857.90px;top:322.40px" width="9" height="9"><use href="#i-calendar"/></svg>
<div class="a t" style="left:873.50px;top:325.42px;font-size:4.1px;color:#4a4a4a;font-weight:normal;">Calendar</div>
<svg class="a" style="left:857.90px;top:336.30px" width="9" height="9"><use href="#i-camera"/></svg>
<div class="a t" style="left:873.50px;top:339.32px;font-size:4.1px;color:#4a4a4a;font-weight:normal;">Camera</div>
<svg class="a" style="left:857.90px;top:350.20px" width="9" height="9"><use href="#i-clock"/></svg>
<div class="a t" style="left:873.50px;top:353.22px;font-size:4.1px;color:#4a4a4a;font-weight:normal;">Clock</div>
<svg class="a" style="left:857.90px;top:364.40px" width="9" height="9"><use href="#i-cortana"/></svg>
<div class="a t" style="left:873.50px;top:367.42px;font-size:4.1px;color:#4a4a4a;font-weight:normal;">Cortana</div>
<svg class="a" style="left:857.90px;top:392.30px" width="9" height="9"><use href="#i-driver"/></svg>
<div class="a t" style="left:873.50px;top:395.32px;font-size:4.1px;color:#4a4a4a;font-weight:normal;">Driver Booster 15</div>
<svg class="a" style="left:857.90px;top:406.50px" width="9" height="9"><use href="#i-dualsafe"/></svg>
<div class="a t" style="left:873.50px;top:409.52px;font-size:4.1px;color:#4a4a4a;font-weight:normal;">DualSafe Password Manager</div>
<div class="a t" style="left:861.20px;top:423.42px;font-size:4.1px;color:#333;font-weight:normal;">F</div>
<svg class="a" style="left:857.90px;top:434.30px" width="9" height="9"><use href="#i-family"/></svg>
<div class="a t" style="left:873.50px;top:437.32px;font-size:4.1px;color:#4a4a4a;font-weight:normal;">Family</div>
<svg class="a" style="left:921.30px;top:283.05px" width="5" height="3.5"><path d="M1 1 L2.5 2.5 L4 1" fill="none" stroke="#666" stroke-width=".7"/></svg>
<svg class="a" style="left:859.40px;top:448.00px" width="6" height="6"><use href="#i-dualsafe"/></svg>
<div class="a" style="left:844.00px;top:451.30px;width:270.70px;height:1.00px;background:#dcdcdc"></div>
<div class="a" style="left:844.00px;top:452.30px;width:270.70px;height:22.00px;background:#ececec"></div>
<svg class="a" style="left:857.75px;top:459.75px" width="6.5" height="6.5"><use href="#i-power"/></svg>
<div class="a t" style="left:1078.00px;top:461.49px;font-size:4.2px;color:#333;font-weight:normal;">IED</div>
<svg class="a" style="left:1089.30px;top:458.00px" width="10" height="10"><use href="#i-user"/></svg>
</div></div>
<div class="card" style="left:149px;top:527px;width:320px;height:240px;background:linear-gradient(180deg,#c6cad3 0.0%,#d0d3d9 30.4%,#d4d4d8 67.9%,#cdb6b2 70.8%,#c4aaa6 83.8%)"><div class="a" style="left:-149px;top:-527px;width:1162px;height:758px">
<div class="a" style="left:164.80px;top:565.70px;width:288.50px;height:200.00px;border-radius:5px 5px 0 0;background:#f1f1f1"></div>
<div class="a t" style="left:180.60px;top:582.18px;font-size:5.6px;color:#1e1e1e;font-weight:bold;">All apps</div>
<div class="a t" style="left:318.80px;top:582.18px;font-size:5.6px;color:#1e1e1e;font-weight:bold;">Pinned</div>
<svg class="a" style="left:181.20px;top:617.40px" width="10" height="10"><use href="#i-folder"/></svg>
<div class="a t" style="left:201.00px;top:620.53px;font-size:5.2px;color:#2a2a2a;font-weight:normal;">Accessibility</div>
<svg class="a" style="left:262.30px;top:620.40px" width="6" height="4.0"><path d="M1 1 L3.0 3.0 L5 1" fill="none" stroke="#666" stroke-width=".7"/></svg>
<svg class="a" style="left:180.95px;top:653.15px" width="10.5" height="10.5"><use href="#i-calculator"/></svg>
<div class="a t" style="left:201.00px;top:656.53px;font-size:5.2px;color:#2a2a2a;font-weight:normal;">Calculator</div>
<svg class="a" style="left:180.95px;top:671.25px" width="10.5" height="10.5"><use href="#i-calendar"/></svg>
<div class="a t" style="left:201.00px;top:674.63px;font-size:5.2px;color:#2a2a2a;font-weight:normal;">Calendar</div>
<svg class="a" style="left:180.95px;top:689.35px" width="10.5" height="10.5"><use href="#i-camera"/></svg>
<div class="a t" style="left:201.00px;top:692.73px;font-size:5.2px;color:#2a2a2a;font-weight:normal;">Camera</div>
<svg class="a" style="left:180.95px;top:707.15px" width="10.5" height="10.5"><use href="#i-clock"/></svg>
<div class="a t" style="left:201.00px;top:710.53px;font-size:5.2px;color:#2a2a2a;font-weight:normal;">Clock</div>
<svg class="a" style="left:180.95px;top:724.25px" width="10.5" height="10.5"><use href="#i-cortana"/></svg>
<svg class="a" style="left:318.20px;top:600.10px" width="15" height="15"><use href="#i-edge"/></svg>
<div class="a t" style="left:295.70px;width:60px;text-align:center;top:618.07px;font-size:5.5px;color:#3a3a3a;font-weight:normal;line-height:7px;">Edge</div>
<svg class="a" style="left:361.70px;top:600.10px" width="15" height="15"><use href="#i-m365"/></svg>
<div class="a t" style="left:339.20px;width:60px;text-align:center;top:618.07px;font-size:5.5px;color:#3a3a3a;font-weight:normal;line-height:7px;">Microsoft 365<br>Copilot</div>
<svg class="a" style="left:404.50px;top:600.10px" width="15" height="15"><use href="#i-outlook"/></svg>
<div class="a t" style="left:382.00px;width:60px;text-align:center;top:618.07px;font-size:5.5px;color:#3a3a3a;font-weight:normal;line-height:7px;">Outlook</div>
<svg class="a" style="left:318.20px;top:638.00px" width="15" height="15"><use href="#i-store"/></svg>
<div class="a t" style="left:295.70px;width:60px;text-align:center;top:655.97px;font-size:5.5px;color:#3a3a3a;font-weight:normal;line-height:7px;">Microsoft Store</div>
<svg class="a" style="left:361.70px;top:638.00px" width="15" height="15"><use href="#i-photos"/></svg>
<div class="a t" style="left:339.20px;width:60px;text-align:center;top:655.97px;font-size:5.5px;color:#3a3a3a;font-weight:normal;line-height:7px;">Photos</div>
<svg class="a" style="left:404.50px;top:638.00px" width="15" height="15"><use href="#i-settings"/></svg>
<div class="a t" style="left:382.00px;width:60px;text-align:center;top:655.97px;font-size:5.5px;color:#3a3a3a;font-weight:normal;line-height:7px;">Settings</div>
<svg class="a" style="left:318.20px;top:675.90px" width="15" height="15"><use href="#i-xbox"/></svg>
<div class="a t" style="left:295.70px;width:60px;text-align:center;top:693.87px;font-size:5.5px;color:#3a3a3a;font-weight:normal;line-height:7px;">Xbox</div>
<svg class="a" style="left:361.70px;top:675.90px" width="15" height="15"><use href="#i-solitaire"/></svg>
<div class="a t" style="left:339.20px;width:60px;text-align:center;top:693.87px;font-size:5.5px;color:#3a3a3a;font-weight:normal;line-height:7px;">Solitaire &amp;<br>Casual Games</div>
<svg class="a" style="left:404.50px;top:675.90px" width="15" height="15"><use href="#i-spotify"/></svg>
<div class="a t" style="left:382.00px;width:60px;text-align:center;top:693.87px;font-size:5.5px;color:#3a3a3a;font-weight:normal;line-height:7px;">Spotify</div>
<svg class="a" style="left:318.20px;top:713.20px" width="15" height="15"><use href="#i-whatsapp"/></svg>
<div class="a t" style="left:295.70px;width:60px;text-align:center;top:731.27px;font-size:5.5px;color:#3a3a3a;font-weight:normal;line-height:7px;"></div>
<svg class="a" style="left:361.70px;top:713.20px" width="15" height="15"><use href="#i-clipchamp"/></svg>
<div class="a t" style="left:339.20px;width:60px;text-align:center;top:731.27px;font-size:5.5px;color:#3a3a3a;font-weight:normal;line-height:7px;"></div>
<svg class="a" style="left:404.50px;top:713.20px" width="15" height="15"><use href="#i-todo"/></svg>
<div class="a t" style="left:382.00px;width:60px;text-align:center;top:731.27px;font-size:5.5px;color:#3a3a3a;font-weight:normal;line-height:7px;"></div>
<div class="a" style="left:438.80px;top:705.00px;width:1.40px;height:1.40px;border-radius:50%;background:#555"></div>
<div class="a" style="left:438.80px;top:710.00px;width:1.40px;height:1.40px;border-radius:50%;background:#555"></div>
</div></div>
<div class="card" style="left:485px;top:527px;width:320px;height:240px;background:linear-gradient(180deg,#c6cad3 0.0%,#d0d3d9 30.4%,#d4d4d8 68.8%,#cdb6b2 72.1%,#c4aaa6 83.8%)"><div class="a" style="left:-485px;top:-527px;width:1162px;height:758px">
<div class="a" style="left:501.40px;top:565.00px;width:288.00px;height:200.00px;border-radius:5px 5px 0 0;background:#f1f1f1"></div>
<div class="a" style="left:516.30px;top:580.00px;width:258.00px;height:13.00px;border-radius:7px;background:#ffffff"></div>
<svg class="a" style="left:523.00px;top:583.50px" width="6" height="6"><use href="#i-search"/></svg>
<div class="a t" style="left:535.50px;top:583.51px;font-size:6.1px;color:#7a7a7a;font-weight:normal;">Search for apps, settings, and documents</div>
<div class="a t" style="left:529.50px;top:615.21px;font-size:5.8px;color:#1e1e1e;font-weight:bold;">Pinned</div>
<div class="a" style="left:725.60px;top:612.50px;width:34.60px;height:9.30px;border-radius:2px;background:#fbfbfb;box-shadow:0 0 0 .5px #ddd"></div>
<div class="a t" style="left:729.00px;top:615.33px;font-size:5.2px;color:#222;font-weight:normal;">All apps</div>
<div class="a t" style="left:753.00px;top:613.69px;font-size:6.5px;color:#333;font-weight:normal;">&#8250;</div>
<svg class="a" style="left:529.50px;top:633.10px" width="15" height="15"><use href="#i-edge"/></svg>
<div class="a t" style="left:507.00px;width:60px;text-align:center;top:650.67px;font-size:5.5px;color:#3a3a3a;font-weight:normal;line-height:7px;">Edge</div>
<svg class="a" style="left:573.10px;top:633.10px" width="15" height="15"><use href="#i-m365"/></svg>
<div class="a t" style="left:550.60px;width:60px;text-align:center;top:650.67px;font-size:5.5px;color:#3a3a3a;font-weight:normal;line-height:7px;">Microsoft 365<br>Copilot</div>
<svg class="a" style="left:616.30px;top:633.10px" width="15" height="15"><use href="#i-outlook"/></svg>
<div class="a t" style="left:593.80px;width:60px;text-align:center;top:650.67px;font-size:5.5px;color:#3a3a3a;font-weight:normal;line-height:7px;">Outlook</div>
<svg class="a" style="left:659.50px;top:633.10px" width="15" height="15"><use href="#i-store"/></svg>
<div class="a t" style="left:637.00px;width:60px;text-align:center;top:650.67px;font-size:5.5px;color:#3a3a3a;font-weight:normal;line-height:7px;">Microsoft Store</div>
<svg class="a" style="left:702.60px;top:633.10px" width="15" height="15"><use href="#i-photos"/></svg>
<div class="a t" style="left:680.10px;width:60px;text-align:center;top:650.67px;font-size:5.5px;color:#3a3a3a;font-weight:normal;line-height:7px;">Photos</div>
<svg class="a" style="left:745.50px;top:633.10px" width="15" height="15"><use href="#i-settings"/></svg>
<div class="a t" style="left:723.00px;width:60px;text-align:center;top:650.67px;font-size:5.5px;color:#3a3a3a;font-weight:normal;line-height:7px;">Settings</div>
<svg class="a" style="left:529.50px;top:670.70px" width="15" height="15"><use href="#i-xbox"/></svg>
<div class="a t" style="left:507.00px;width:60px;text-align:center;top:688.27px;font-size:5.5px;color:#3a3a3a;font-weight:normal;line-height:7px;">Xbox</div>
<svg class="a" style="left:573.10px;top:670.70px" width="15" height="15"><use href="#i-solitaire"/></svg>
<div class="a t" style="left:550.60px;width:60px;text-align:center;top:688.27px;font-size:5.5px;color:#3a3a3a;font-weight:normal;line-height:7px;">Solitaire &amp;<br>Casual Games</div>
<svg class="a" style="left:616.30px;top:670.70px" width="15" height="15"><use href="#i-spotify"/></svg>
<div class="a t" style="left:593.80px;width:60px;text-align:center;top:688.27px;font-size:5.5px;color:#3a3a3a;font-weight:normal;line-height:7px;">Spotify</div>
<svg class="a" style="left:659.50px;top:670.70px" width="15" height="15"><use href="#i-whatsapp"/></svg>
<div class="a t" style="left:637.00px;width:60px;text-align:center;top:688.27px;font-size:5.5px;color:#3a3a3a;font-weight:normal;line-height:7px;">WhatsApp</div>
<svg class="a" style="left:702.60px;top:670.70px" width="15" height="15"><use href="#i-clipchamp"/></svg>
<div class="a t" style="left:680.10px;width:60px;text-align:center;top:688.27px;font-size:5.5px;color:#3a3a3a;font-weight:normal;line-height:7px;">Microsoft<br>Clipchamp</div>
<svg class="a" style="left:745.50px;top:670.70px" width="15" height="15"><use href="#i-todo"/></svg>
<div class="a t" style="left:723.00px;width:60px;text-align:center;top:688.27px;font-size:5.5px;color:#3a3a3a;font-weight:normal;line-height:7px;">To Do</div>
<svg class="a" style="left:529.50px;top:708.50px" width="15" height="15"><use href="#i-linkedin"/></svg>
<div class="a t" style="left:507.00px;width:60px;text-align:center;top:726.27px;font-size:5.5px;color:#3a3a3a;font-weight:normal;line-height:7px;">LinkedIn</div>
<svg class="a" style="left:573.10px;top:708.50px" width="15" height="15"><use href="#i-calculator"/></svg>
<div class="a t" style="left:550.60px;width:60px;text-align:center;top:726.27px;font-size:5.5px;color:#3a3a3a;font-weight:normal;line-height:7px;">Calculator</div>
<svg class="a" style="left:616.30px;top:708.50px" width="15" height="15"><use href="#i-clock"/></svg>
<div class="a t" style="left:593.80px;width:60px;text-align:center;top:726.27px;font-size:5.5px;color:#3a3a3a;font-weight:normal;line-height:7px;">Clock</div>
<svg class="a" style="left:659.50px;top:708.50px" width="15" height="15"><use href="#i-notepad"/></svg>
<div class="a t" style="left:637.00px;width:60px;text-align:center;top:726.27px;font-size:5.5px;color:#3a3a3a;font-weight:normal;line-height:7px;">Notepad</div>
<svg class="a" style="left:702.60px;top:708.50px" width="15" height="15"><use href="#i-paint"/></svg>
<div class="a t" style="left:680.10px;width:60px;text-align:center;top:726.27px;font-size:5.5px;color:#3a3a3a;font-weight:normal;line-height:7px;">Paint</div>
<svg class="a" style="left:745.50px;top:708.50px" width="15" height="15"><use href="#i-movies"/></svg>
<div class="a t" style="left:723.00px;width:60px;text-align:center;top:726.27px;font-size:5.5px;color:#3a3a3a;font-weight:normal;line-height:7px;">Movies &amp; TV</div>
</div></div>
<div class="card" style="left:821px;top:527px;width:320px;height:240px;background:linear-gradient(180deg,#c6cad3 0.0%,#ccd0d8 38.8%,#d0d3d9 83.8%)"><div class="a" style="left:-821px;top:-527px;width:1162px;height:758px">
<div class="a" style="left:838.70px;top:660.70px;width:285.70px;height:100.00px;border-radius:6px 6px 0 0;background:#efefef;box-shadow:0 0 0 1px #d6d6d8"></div>
<div class="a" style="left:850.60px;top:674.60px;width:216.00px;height:18.00px;border-radius:4px;background:#ebebeb;box-shadow:0 0 0 .6px #dcdcdc"></div>
<svg class="a" style="left:858.25px;top:680.35px" width="6.5" height="6.5"><use href="#i-search"/></svg>
<div class="a t" style="left:870.50px;top:680.58px;font-size:6.15px;color:#6a6a6a;font-weight:normal;">Search for apps, settings, and documents</div>
<div class="a" style="left:1071.30px;top:674.60px;width:18.00px;height:18.00px;border-radius:3px;background:#efefef;box-shadow:0 0 0 .6px #d0d0d0"></div>
<svg class="a" style="left:1075.30px;top:678.60px" width="10" height="10"><use href="#i-power"/></svg>
<div class="a" style="left:1093.70px;top:674.60px;width:18.00px;height:18.00px;border-radius:3px;background:#efefef;box-shadow:0 0 0 .6px #d0d0d0"></div>
<div class="a t" style="left:1096.00px;top:681.62px;font-size:5.5px;color:#222;font-weight:normal;">All a</div>
<svg class="a" style="left:860.10px;top:718.00px" width="14" height="14"><use href="#i-edge"/></svg>
<svg class="a" style="left:905.30px;top:718.00px" width="14" height="14"><use href="#i-m365"/></svg>
<svg class="a" style="left:950.80px;top:718.00px" width="14" height="14"><use href="#i-outlook"/></svg>
<svg class="a" style="left:996.00px;top:718.00px" width="14" height="14"><use href="#i-store"/></svg>
<svg class="a" style="left:1041.50px;top:718.00px" width="14" height="14"><use href="#i-photos"/></svg>
<svg class="a" style="left:1086.70px;top:718.00px" width="14" height="14"><use href="#i-settings"/></svg>
</div></div>
<div class="cl" style="left:209px;width:200px;top:488px">Translucent</div>
<div class="cl" style="left:545px;width:200px;top:488px">Side by Side</div>
<div class="cl" style="left:880px;width:200px;top:488px">Side by Side Reversal</div>
</div></div></body></html>
